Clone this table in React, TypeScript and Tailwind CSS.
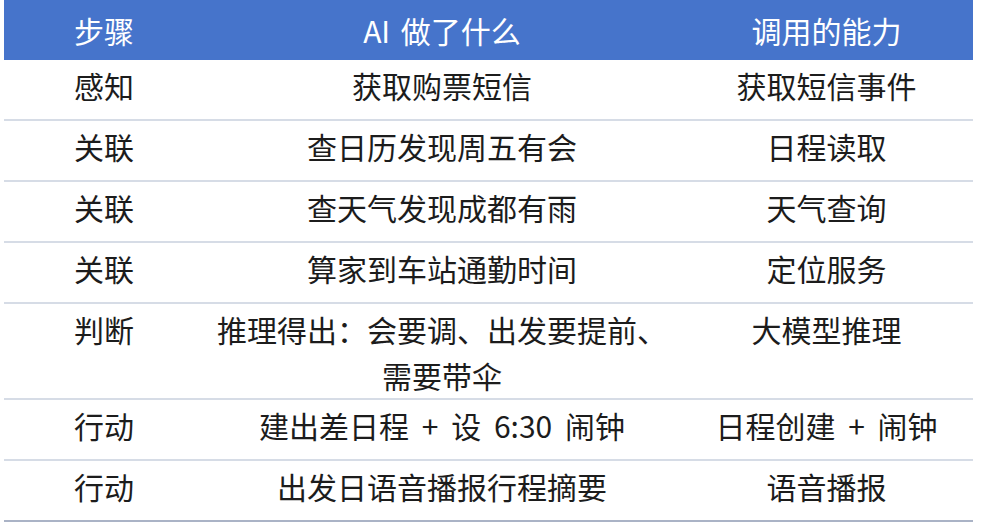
import React from "react";

const rows: { step: string; what: string; cap: string }[] = [
  { step: "感知", what: "获取购票短信", cap: "获取短信事件" },
  { step: "关联", what: "查日历发现周五有会", cap: "日程读取" },
  { step: "关联", what: "查天气发现成都有雨", cap: "天气查询" },
  { step: "关联", what: "算家到车站通勤时间", cap: "定位服务" },
  { step: "判断", what: "推理得出：会要调、出发要提前、需要带伞", cap: "大模型推理" },
  { step: "行动", what: "建出差日程 + 设 6:30 闹钟", cap: "日程创建 + 闹钟" },
  { step: "行动", what: "出发日语音播报行程摘要", cap: "语音播报" },
];

const App = () => {
  return (
    <div
      className="w-[985px] h-[525px] bg-white pl-[4px] overflow-hidden text-[30px] text-[#1c1c1c]"
      style={{ fontFamily: '"Noto Sans CJK SC", "Noto Sans", sans-serif' }}
    >
      <div className="w-[969px]">
        {/* header */}
        <div className="grid grid-cols-[200px_476px_293px] h-[60px] bg-[#4674cb] text-white items-center text-center leading-[46px]">
          <div>步骤</div>
          <div className="[word-spacing:4px]">AI 做了什么</div>
          <div>调用的能力</div>
        </div>
        {rows.map((r, i) => (
          <div
            key={i}
            className={
              "grid grid-cols-[200px_476px_293px] min-h-[61px] items-start pt-[2px] text-center leading-[46px] border-b-2 [word-spacing:6px] " +
              (i === rows.length - 1 ? "border-[#aab3c6]" : "border-[#d6dce6]")
            }
          >
            <div>{r.step}</div>
            <div className="px-[8px]">{r.what}</div>
            <div>{r.cap}</div>
          </div>
        ))}
      </div>
    </div>
  );
};

export default App;
